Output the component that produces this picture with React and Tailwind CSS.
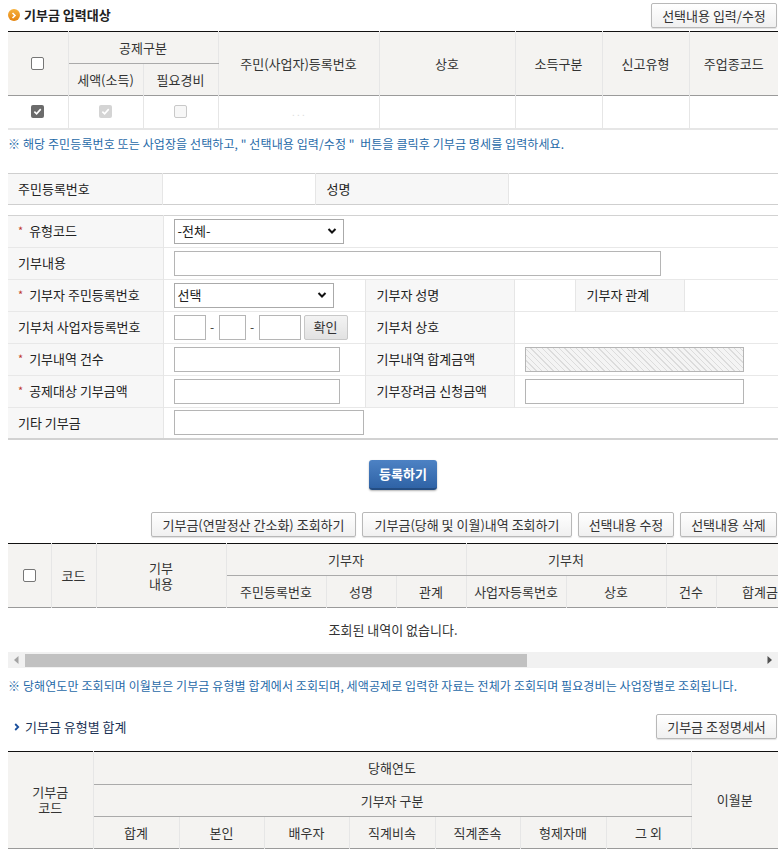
import React from "react";

function Check({ kind }) {
  if (kind === "empty") {
    return <div className="mx-auto w-[13px] h-[13px] rounded-[2px] border border-[#767676] bg-white" />;
  }
  if (kind === "checked") {
    return (
      <div className="mx-auto w-[13px] h-[13px] rounded-[2px] bg-[#6b6b6b] flex items-center justify-center">
        <svg width="9" height="9" viewBox="0 0 10 10"><path d="M1.5 5.2 L4 7.6 L8.6 2.4" stroke="#fff" strokeWidth="1.8" fill="none" /></svg>
      </div>
    );
  }
  if (kind === "dischecked") {
    return (
      <div className="mx-auto w-[13px] h-[13px] rounded-[2px] bg-[#d4d4d4] flex items-center justify-center">
        <svg width="9" height="9" viewBox="0 0 10 10"><path d="M1.5 5.2 L4 7.6 L8.6 2.4" stroke="#fff" strokeWidth="1.8" fill="none" /></svg>
      </div>
    );
  }
  return <div className="mx-auto w-[13px] h-[13px] rounded-[2px] border border-[#c9c9c9] bg-[#f7f7f7]" />;
}

function Btn({ children, className = "" }) {
  return (
    <button className={"h-[25px] px-[8px] border border-[#b8b8b8] rounded-[2px] bg-linear-to-b from-white to-[#f0f0f0] text-[13px] leading-none text-[#333] shadow-[0_1px_1px_rgba(0,0,0,0.12)] whitespace-nowrap " + className}>
      {children}
    </button>
  );
}

function Sel({ w, text }) {
  return (
    <div className={"h-[25px] border border-[#aaa] bg-white flex items-center justify-between pl-[3px] pr-[6px] text-[13px] text-[#222] " + w}>
      <span>{text}</span>
      <svg width="10" height="8" viewBox="0 0 10 8"><path d="M1.5 2 L5 5.5 L8.5 2" stroke="#111" strokeWidth="2" fill="none" /></svg>
    </div>
  );
}

function Inp({ w, hatched }) {
  return (
    <div
      className={
        "h-[25px] border border-[#b5b5b5] " +
        (hatched
          ? "bg-[repeating-linear-gradient(45deg,#f4f4f4_0px,#f4f4f4_3px,#dcdcdc_3px,#dcdcdc_4px)] "
          : "bg-white ") +
        w
      }
    />
  );
}

function Req() {
  return <span className="text-[#c0392b] text-[11px] mr-[6px] relative top-[-1px]">*</span>;
}

export default function App() {
  const th = "border-r border-[#e6e6e6] font-normal text-[13px] leading-[16px] text-[#333] text-center";
  const lab = "bg-[#f7f7f7] border-r border-[#e6e6e6] text-[13px] text-[#222] text-left";
  return (
    <div className="w-[784px] h-[856px] overflow-hidden bg-white font-['Noto_Sans_CJK_KR','Noto_Sans',sans-serif] leading-[1.2]">
      <div className="ml-2 w-[770px]">
        {/* Title */}
        <div className="pt-[3px] flex items-center justify-between h-[27px]">
          <div className="flex items-center gap-[4px]">
            <div className="w-[12px] h-[12px] rounded-full bg-linear-to-b from-[#f7b23c] to-[#e4840c] flex items-center justify-center">
              <svg width="6" height="7" viewBox="0 0 6 7"><path d="M1.5 1 L4 3.5 L1.5 6" stroke="#fff" strokeWidth="1.6" fill="none" /></svg>
            </div>
            <span className="text-[13px] font-bold text-[#222]">기부금 입력대상</span>
          </div>
          <Btn className="h-[24px] mr-[1px] w-[126px]">선택내용 입력/수정</Btn>
        </div>

        {/* Table 1 */}
        <table className="mt-[4px] w-[770px] table-fixed border-collapse border-t border-[#111]">
          <colgroup>
            <col className="w-[60px]" /><col className="w-[75px]" /><col className="w-[75px]" /><col className="w-[161px]" />
            <col className="w-[136px]" /><col className="w-[87px]" /><col className="w-[87px]" /><col className="w-[89px]" />
          </colgroup>
          <thead className="bg-[#f4f3f1]">
            <tr className="h-[32px]">
              <th rowSpan={2} className={th}><Check kind="empty" /></th>
              <th colSpan={2} className={th + " border-b border-b-[#aaa]"}>공제구분</th>
              <th rowSpan={2} className={th}>주민(사업자)등록번호</th>
              <th rowSpan={2} className={th}>상호</th>
              <th rowSpan={2} className={th}>소득구분</th>
              <th rowSpan={2} className={th}>신고유형</th>
              <th rowSpan={2} className="font-normal text-[13px] text-[#333] text-center">주업종코드</th>
            </tr>
            <tr className="h-[32px] border-b border-[#9a9a9a]">
              <th className={th}>세액(소득)</th>
              <th className={th}>필요경비</th>
            </tr>
          </thead>
          <tbody>
            <tr className="h-[33px] border-b-2 border-[#e6e6e6]">
              <td className="border-r border-[#e6e6e6]"><Check kind="checked" /></td>
              <td className="border-r border-[#e6e6e6]"><Check kind="dischecked" /></td>
              <td className="border-r border-[#e6e6e6]"><Check kind="disabled" /></td>
              <td className="border-r border-[#e6e6e6] text-center text-[10px] text-[#ddd]">. . .</td>
              <td className="border-r border-[#e6e6e6]"></td>
              <td className="border-r border-[#e6e6e6]"></td>
              <td className="border-r border-[#e6e6e6]"></td>
              <td></td>
            </tr>
          </tbody>
        </table>

        <div className="h-[30px] flex items-center text-[12px] text-[#1f6aa8] tracking-[0.1px] whitespace-pre">
          ※ 해당 주민등록번호 또는 사업장을 선택하고, " 선택내용 입력/수정 "  버튼을 클릭후 기부금 명세를 입력하세요.
        </div>

        {/* Form 1 */}
        <table className="mt-[13px] w-[770px] table-fixed border-collapse border-t border-b border-[#cfcfcf]">
          <colgroup>
            <col className="w-[154px]" /><col className="w-[153px]" /><col className="w-[193px]" /><col className="w-[270px]" />
          </colgroup>
          <tbody>
            <tr className="h-[31px]">
              <td className={lab + " pl-[10px]"}>주민등록번호</td>
              <td className="border-r border-[#e6e6e6]"></td>
              <td className={lab + " pl-[11px]"}>성명</td>
              <td></td>
            </tr>
          </tbody>
        </table>

        {/* Form 2 */}
        <table className="mt-[10px] w-[770px] table-fixed border-collapse border-t border-b-2 border-[#d2d2d2]">
          <colgroup>
            <col className="w-[155px]" /><col className="w-[202px]" /><col className="w-[149px]" />
            <col className="w-[61px]" /><col className="w-[109px]" /><col className="w-[94px]" />
          </colgroup>
          <tbody>
            <tr className="h-[32px] border-b border-[#e8e8e8]">
              <td className={lab + " pl-[10px]"}><Req />유형코드</td>
              <td colSpan={5} className="pl-[10px]"><Sel w="w-[170px]" text="-전체-" /></td>
            </tr>
            <tr className="h-[32px] border-b border-[#e8e8e8]">
              <td className={lab + " pl-[10px]"}>기부내용</td>
              <td colSpan={5} className="pl-[10px]"><Inp w="w-[487px]" /></td>
            </tr>
            <tr className="h-[32px] border-b border-[#e8e8e8]">
              <td className={lab + " pl-[10px]"}><Req />기부자 주민등록번호</td>
              <td className="pl-[10px] border-r border-[#e6e6e6]"><Sel w="w-[160px]" text="선택" /></td>
              <td className={lab + " pl-[11px]"}>기부자 성명</td>
              <td className="border-r border-[#e6e6e6]"></td>
              <td className={lab + " pl-[11px]"}>기부자 관계</td>
              <td></td>
            </tr>
            <tr className="h-[32px] border-b border-[#e8e8e8]">
              <td className={lab + " pl-[10px]"}>기부처 사업자등록번호</td>
              <td className="pl-[10px] border-r border-[#e6e6e6]">
                <div className="flex items-center text-[12px] text-[#333]">
                  <Inp w="w-[32px]" />
                  <span className="w-[13px] text-center">-</span>
                  <Inp w="w-[27px]" />
                  <span className="w-[13px] text-center">-</span>
                  <Inp w="w-[42px]" />
                  <button className="ml-[3px] h-[25px] w-[44px] border border-[#c8c8c8] bg-linear-to-b from-[#f3f3f3] to-[#e2e2e2] rounded-[2px] text-[13px] text-[#333]">확인</button>
                </div>
              </td>
              <td className={lab + " pl-[11px]"}>기부처 상호</td>
              <td colSpan={3}></td>
            </tr>
            <tr className="h-[32px] border-b border-[#e8e8e8]">
              <td className={lab + " pl-[10px]"}><Req />기부내역 건수</td>
              <td className="pl-[10px] border-r border-[#e6e6e6]"><Inp w="w-[166px]" /></td>
              <td className={lab + " pl-[11px]"}>기부내역 합계금액</td>
              <td colSpan={3} className="pl-[10px]"><Inp w="w-[219px]" hatched /></td>
            </tr>
            <tr className="h-[32px] border-b border-[#e8e8e8]">
              <td className={lab + " pl-[10px]"}><Req />공제대상 기부금액</td>
              <td className="pl-[10px] border-r border-[#e6e6e6]"><Inp w="w-[166px]" /></td>
              <td className={lab + " pl-[11px]"}>기부장려금 신청금액</td>
              <td colSpan={3} className="pl-[10px]"><Inp w="w-[219px]" /></td>
            </tr>
            <tr className="h-[32px]">
              <td className={lab + " pl-[10px]"}>기타 기부금</td>
              <td colSpan={5} className="pl-[10px]"><Inp w="w-[190px]" /></td>
            </tr>
          </tbody>
        </table>

        {/* Register */}
        <div className="mt-[20px] flex justify-center pl-[20px]">
          <button className="h-[30px] w-[68px] rounded-[3px] bg-linear-to-b from-[#4d82c4] to-[#2f63a6] border-b-2 border-[#244d82] text-white text-[13px] font-bold shadow-[0_1px_2px_rgba(0,0,0,0.3)]">등록하기</button>
        </div>

        {/* Buttons */}
        <div className="mt-[22px] flex justify-end gap-[6px] mr-[1px]">
          <Btn className="w-[205px]">기부금(연말정산 간소화) 조회하기</Btn>
          <Btn className="w-[210px]">기부금(당해 및 이월)내역 조회하기</Btn>
          <Btn className="w-[96px]">선택내용 수정</Btn>
          <Btn className="w-[97px]">선택내용 삭제</Btn>
        </div>

        {/* Table 2 */}
        <div className="mt-[6px] w-[770px] overflow-hidden">
          <table className="w-[1000px] table-fixed border-collapse border-t border-[#111]">
            <colgroup>
              <col className="w-[43px]" /><col className="w-[45px]" /><col className="w-[130px]" /><col className="w-[100px]" />
              <col className="w-[70px]" /><col className="w-[70px]" /><col className="w-[100px]" /><col className="w-[100px]" />
              <col className="w-[50px]" /><col className="w-[100px]" /><col className="w-[92px]" /><col className="w-[100px]" />
            </colgroup>
            <thead className="bg-[#f4f3f1]">
              <tr className="h-[32px]">
                <th rowSpan={2} className={th}><Check kind="empty" /></th>
                <th rowSpan={2} className={th}>코드</th>
                <th rowSpan={2} className={th}>기부<br />내용</th>
                <th colSpan={3} className={th + " border-b border-b-[#aaa]"}>기부자</th>
                <th colSpan={2} className={th + " border-b border-b-[#aaa]"}>기부처</th>
                <th colSpan={4} className={th + " border-b border-b-[#aaa]"}>공제금액</th>
              </tr>
              <tr className="h-[32px] border-b border-[#9a9a9a]">
                <th className={th}>주민등록번호</th>
                <th className={th}>성명</th>
                <th className={th}>관계</th>
                <th className={th}>사업자등록번호</th>
                <th className={th}>상호</th>
                <th className={th}>건수</th>
                <th className={th}>합계금액</th>
                <th className={th}>공제대상금액</th>
                <th className={th}>기부장려금</th>
              </tr>
            </thead>
          </table>
          <div className="h-[44px] flex items-center justify-center text-[13px] text-[#333]">조회된 내역이 없습니다.</div>
          <div className="h-[16px] bg-[#f1f1f1] flex items-center">
            <div className="w-[17px] flex justify-center">
              <svg width="5" height="8" viewBox="0 0 5 8"><path d="M4.5 0 L0 4 L4.5 8 Z" fill="#a3a3a3" /></svg>
            </div>
            <div className="w-[502px] h-[13px] bg-[#c1c1c1]" />
            <div className="flex-1" />
            <div className="w-[17px] flex justify-center">
              <svg width="5" height="8" viewBox="0 0 5 8"><path d="M0.5 0 L5 4 L0.5 8 Z" fill="#505050" /></svg>
            </div>
          </div>
        </div>

        <div className="h-[36px] flex items-center text-[12px] text-[#1f6aa8] tracking-[0.1px] whitespace-nowrap">
          ※ 당해연도만 조회되며 이월분은 기부금 유형별 합계에서 조회되며, 세액공제로 입력한 자료는 전체가 조회되며 필요경비는 사업장별로 조회됩니다.
        </div>

        {/* Section 2 title */}
        <div className="mt-[10px] flex items-center justify-between h-[25px]">
          <div className="flex items-center pl-[6px] gap-[5px]">
            <svg width="6" height="8" viewBox="0 0 6 8"><path d="M1.2 1 L4.2 4 L1.2 7" stroke="#1a4f9c" strokeWidth="1.8" fill="none" /></svg>
            <span className="text-[13px] text-[#1d3557]">기부금 유형별 합계</span>
          </div>
          <Btn className="w-[121px] h-[25px] mr-[1px]">기부금 조정명세서</Btn>
        </div>

        {/* Table 3 */}
        <table className="mt-[12px] w-[770px] table-fixed border-collapse border-t border-[#111] border-b border-b-[#9a9a9a]">
          <colgroup>
            <col className="w-[85px]" /><col className="w-[86px]" /><col className="w-[85px]" /><col className="w-[85px]" />
            <col className="w-[86px]" /><col className="w-[85px]" /><col className="w-[86px]" /><col className="w-[85px]" /><col className="w-[87px]" />
          </colgroup>
          <thead className="bg-[#f4f3f1]">
            <tr className="h-[33px]">
              <th rowSpan={3} className={th}>기부금<br />코드</th>
              <th colSpan={7} className={th + " border-b border-b-[#aaa]"}>당해연도</th>
              <th rowSpan={3} className="font-normal text-[13px] text-[#333] text-center">이월분</th>
            </tr>
            <tr className="h-[32px]">
              <th colSpan={7} className={th + " border-b border-b-[#aaa]"}>기부자 구분</th>
            </tr>
            <tr className="h-[32px]">
              <th className={th}>합계</th>
              <th className={th}>본인</th>
              <th className={th}>배우자</th>
              <th className={th}>직계비속</th>
              <th className={th}>직계존속</th>
              <th className={th}>형제자매</th>
              <th className={th}>그 외</th>
            </tr>
          </thead>
        </table>
      </div>
    </div>
  );
}
